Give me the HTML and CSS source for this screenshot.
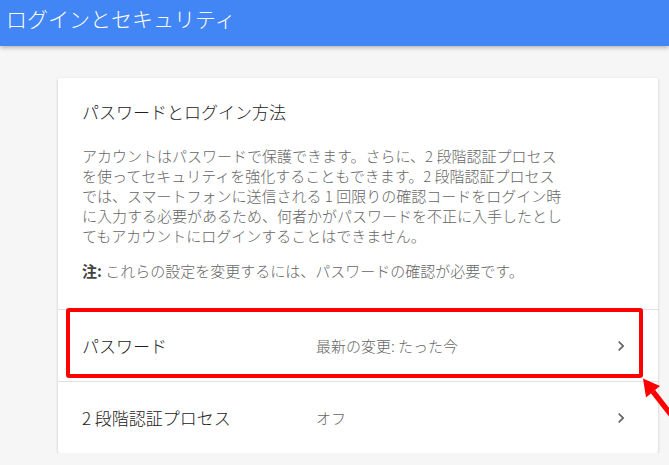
FILE: index.html
```html
<!DOCTYPE html>
<html>
<head>
    <meta charset="utf-8">
    <link rel="stylesheet" href="styles.css">
</head>
<body>
    <header class="app-bar">
        <div class="app-title">ログインとセキュリティ</div>
    </header>

    <main class="content">
        <section class="card">
            <div class="card-intro">
                <h2 class="card-title">パスワードとログイン方法</h2>
                <p class="card-text">
                    アカウントはパスワードで保護できます。さらに、2 段階認証プロセス<br>
                    を使ってセキュリティを強化することもできます。2 段階認証プロセス<br>
                    では、スマートフォンに送信される 1 回限りの確認コードをログイン時<br>
                    に入力する必要があるため、何者かがパスワードを不正に入手したとし<br>
                    てもアカウントにログインすることはできません。
                </p>
                <p class="card-text note"><b>注:</b> これらの設定を変更するには、パスワードの確認が必要です。</p>
            </div>

            <a class="setting-row" href="#">
                <span class="setting-label">パスワード</span>
                <span class="setting-value">最新の変更: たった今</span>
                <svg class="chevron" viewBox="0 0 24 24" width="20" height="20"><path d="M10 6L8.59 7.41 13.17 12l-4.58 4.59L10 18l6-6z"/></svg>
            </a>
            <a class="setting-row" href="#">
                <span class="setting-label">2 段階認証プロセス</span>
                <span class="setting-value">オフ</span>
                <svg class="chevron" viewBox="0 0 24 24" width="20" height="20"><path d="M10 6L8.59 7.41 13.17 12l-4.58 4.59L10 18l6-6z"/></svg>
            </a>

            <!-- red callout drawn over the password row -->
            <div class="highlight"></div>
            <svg class="pointer" viewBox="0 0 29 45" width="29" height="45">
                <line x1="13" y1="16.6" x2="32" y2="41" stroke="#f00" stroke-width="5.5"/>
                <polygon points="3,3.5 20,11 6,22.5" fill="#f00"/>
            </svg>
        </section>
    </main>
</body>
</html>
```

FILE: styles.css
```css
html {
    overflow: hidden;
}
body {
    margin: 0;
    background: #f6f6f6;
    font-family: "Noto Sans CJK JP", "Noto Sans", sans-serif;
    font-weight: 300;
    color: #212121;
}
.app-bar {
    height: 46px;
    background: #4285f4;
    box-shadow: 0 2px 4px rgba(0, 0, 0, 0.25);
    position: relative;
}
.app-title {
    padding-left: 6px;
    line-height: 36px;
    font-size: 21px;
    color: #ffffff;
}
.content {
    padding: 32px 0 0 58px;
}
.card {
    position: relative;
    width: 600px;
    background: #ffffff;
    border-radius: 2px;
    box-shadow: 0 1px 3px rgba(0, 0, 0, 0.2);
}
.card-intro {
    padding: 22px 24px 28px;
}
.card-title {
    margin: 0;
    font-size: 17px;
    font-weight: 300;
    line-height: 24px;
    color: #212121;
}
.card-text {
    margin: 22px 0 0;
    font-size: 15px;
    line-height: 20px;
    color: #666666;
    white-space: nowrap;
}
.card-text.note {
    margin-top: 15px;
}
.note b {
    font-weight: bold;
    color: #424242;
}
.setting-row {
    display: grid;
    grid-template-columns: 234px 1fr 20px;
    align-items: center;
    height: 71px;
    padding: 0 27px 0 24px;
    border-top: 1px solid #e0e0e0;
    text-decoration: none;
}
.setting-label {
    font-size: 17px;
    color: #212121;
}
.setting-value {
    font-size: 15px;
    color: #666666;
}
.chevron {
    fill: #5f6368;
}
.highlight {
    position: absolute;
    left: 8px;
    top: 230px;
    width: 569px;
    height: 62px;
    border: 4px solid #f00;
    border-radius: 3px;
}
.pointer {
    position: absolute;
    left: 582px;
    top: 297px;
}
```
